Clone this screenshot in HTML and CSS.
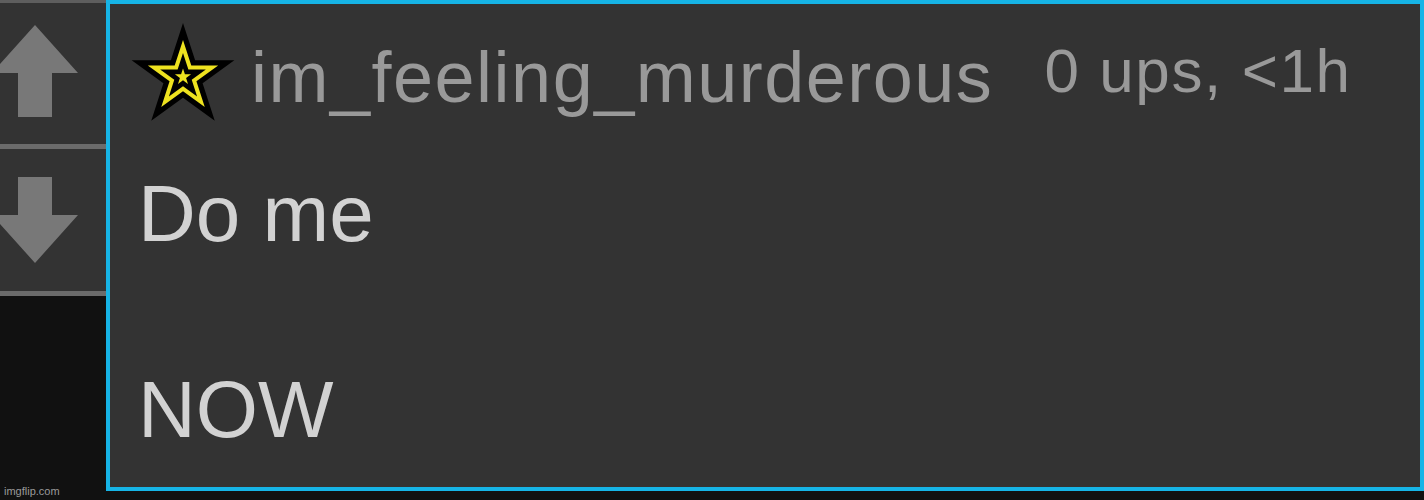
FILE: index.html
```html
<!DOCTYPE html>
<html>
<head>
<meta charset="utf-8">
<title>Comment</title>
<link rel="stylesheet" href="styles.css">
</head>
<body>
<div class="page">
  <div class="votes">
    <div class="vote vote-up">
      <svg class="arrow" width="86" height="92" viewBox="0 0 86 92"><polygon points="43,0 86,48 60,48 60,92 26,92 26,48 0,48" fill="#787878"/></svg>
    </div>
    <div class="vote vote-down">
      <svg class="arrow" width="86" height="86" viewBox="0 0 86 86"><polygon points="26,0 60,0 60,38 86,38 43,86 0,38 26,38" fill="#787878"/></svg>
    </div>
  </div>
  <div class="comment">
    <div class="comment-head">
      <svg class="badge" width="110" height="110" viewBox="-55 -55 110 110">
        <defs>
          <polygon id="st" points="0,-1 0.2245,-0.309 0.951,-0.309 0.363,0.118 0.588,0.809 0,0.382 -0.588,0.809 -0.363,0.118 -0.951,-0.309 -0.2245,-0.309"/>
        </defs>
        <use href="#st" transform="scale(54)" fill="#000"/>
        <use href="#st" transform="scale(37)" fill="#eee21f"/>
        <use href="#st" transform="scale(24)" fill="#000"/>
        <use href="#st" transform="scale(8.5)" fill="#eee21f"/>
      </svg>
      <span class="user">im_feeling_murderous</span>
      <span class="meta">0 ups, &lt;1h</span>
    </div>
    <div class="comment-body">Do me<br><br>NOW</div>
  </div>
  <div class="watermark">imgflip.com</div>
</div>
</body>
</html>
```
FILE: styles.css
```css
html, body {
  margin: 0;
  padding: 0;
  background: #111111;
}
.page {
  position: relative;
  display: flex;
  align-items: flex-start;
  width: 1424px;
  height: 500px;
  overflow: hidden;
  font-family: "Liberation Sans", Arial, sans-serif;
}
.votes {
  width: 106px;
  flex: none;
  border-top: 3px solid #5e5e5e;
}
.vote {
  box-sizing: border-box;
  background: #333333;
  border-bottom: 5px solid #6b6b6b;
  overflow: hidden;
}
.vote-up {
  height: 146px;
  padding-top: 22px;
}
.vote-down {
  height: 147px;
  padding-top: 28px;
}
.arrow {
  display: block;
  margin-left: -8px;
}
.comment {
  box-sizing: border-box;
  width: 1318px;
  height: 491px;
  flex: none;
  border: 4px solid #16b4e6;
  background: #333333;
  padding: 18px 0 0 18px;
}
.comment-head {
  display: flex;
  align-items: flex-start;
}
.badge {
  display: block;
  flex: none;
}
.user {
  margin-left: 13px;
  margin-top: 19px;
  font-size: 72px;
  line-height: 1;
  letter-spacing: 1.5px;
  color: #999999;
  white-space: nowrap;
}
.meta {
  margin-left: 51px;
  margin-top: 18px;
  font-size: 62px;
  line-height: 1;
  letter-spacing: 1.6px;
  color: #999999;
  white-space: nowrap;
}
.comment-body {
  margin-top: 33px;
  margin-left: 10px;
  font-size: 80px;
  line-height: 98px;
  color: #d2d2d2;
}
.watermark {
  position: absolute;
  left: 4px;
  bottom: 3px;
  font-size: 11px;
  color: #9a9a9a;
}
```
